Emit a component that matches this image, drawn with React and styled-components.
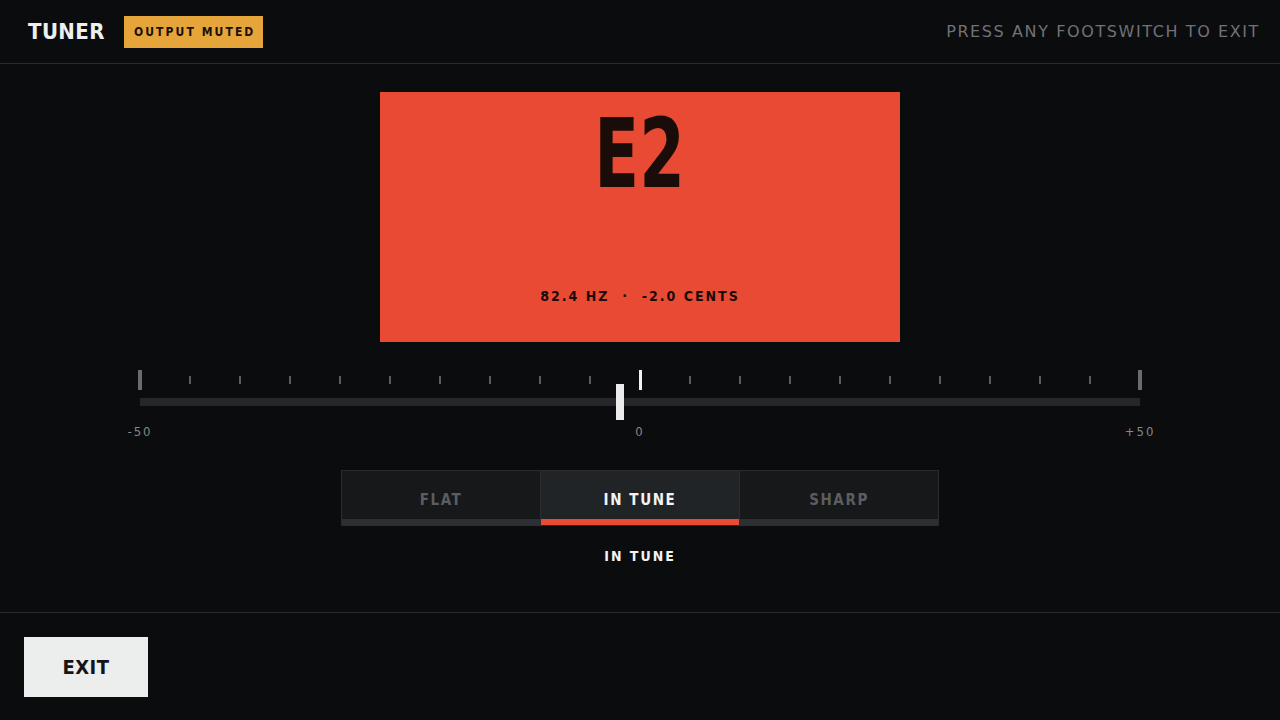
import styled, { createGlobalStyle } from "styled-components";

const GlobalStyle = createGlobalStyle`
  html, body {
    margin: 0;
    padding: 0;
    background: #0b0c0e;
  }
  * { box-sizing: border-box; }
`;

const condensed = `"Liberation Sans Narrow", "DejaVu Sans Condensed", "Liberation Sans", sans-serif`;

const Screen = styled.div`
  width: 1280px;
  height: 720px;
  display: flex;
  flex-direction: column;
  background: #0b0c0e;
  font-family: ${condensed};
  overflow: hidden;
`;

const Header = styled.header`
  height: 64px;
  display: flex;
  align-items: center;
  padding: 0 20px 0 28px;
  border-bottom: 1px solid #2a2b2e;
  flex-shrink: 0;
`;

const Title = styled.div`
  font-size: 22px;
  font-weight: 700;
  color: #eef0f0;
  letter-spacing: 0.4px;
`;

const Badge = styled.div`
  margin-left: 19px;
  height: 32px;
  padding: 0 8px 0 10px;
  display: flex;
  align-items: center;
  background: #e5a53a;
  color: #1b1206;
  font-size: 12px;
  font-weight: 700;
  letter-spacing: 2.1px;
`;

const Hint = styled.div`
  margin-left: auto;
  font-family: "DejaVu Sans", "Liberation Sans", sans-serif;
  font-size: 16px;
  color: #707276;
  letter-spacing: 1.6px;
`;

const Main = styled.main`
  flex: 1;
  display: flex;
  flex-direction: column;
  align-items: center;
  padding-top: 28px;
`;

const NoteBox = styled.div`
  width: 520px;
  height: 250px;
  background: #e84a33;
  display: flex;
  flex-direction: column;
  align-items: center;
  color: #1a0c08;
`;

const Note = styled.div`
  font-size: 96px;
  font-weight: 700;
  line-height: 1;
  margin-top: 14px;
  transform: scaleX(0.76);
`;

const Reading = styled.div`
  margin-top: auto;
  margin-bottom: 38px;
  font-size: 14px;
  font-weight: 700;
  letter-spacing: 2px;
`;

const Scale = styled.div`
  margin-top: 28px;
  width: 1004px;
  position: relative;
`;

const Ticks = styled.div`
  height: 20px;
  display: flex;
  justify-content: space-between;
`;

const TickCell = styled.div`
  width: 4px;
  display: flex;
  justify-content: center;
  align-items: center;
`;

const Tick = styled.div`
  width: ${({ kind }) => (kind === "end" ? 4 : kind === "center" ? 3 : 2)}px;
  height: ${({ kind }) => (kind === "minor" ? 8 : 20)}px;
  background: ${({ kind }) =>
    kind === "center" ? "#f2f2f2" : kind === "end" ? "#6a6c70" : "#5a5c60"};
`;

const Track = styled.div`
  margin: 8px 2px 0;
  height: 8px;
  background: #25272a;
`;

const Needle = styled.div`
  position: absolute;
  top: 14px;
  width: 8px;
  height: 36px;
  margin-left: -4px;
  background: #ececec;
`;

const Labels = styled.div`
  margin: 18px -18px 0;
  display: flex;
  justify-content: space-between;
`;

const Label = styled.div`
  width: 40px;
  text-align: center;
  font-size: 13px;
  color: #85878b;
  letter-spacing: 2px;
`;

const Segments = styled.div`
  margin-top: 31px;
  width: 598px;
  display: flex;
  border: 1px solid #2a2c2f;
`;

const Segment = styled.div`
  flex: 1;
  height: 54px;
  display: flex;
  flex-direction: column;
  background: ${({ active }) => (active ? "#212427" : "#16181a")};
  & + & {
    border-left: 1px solid #2a2c2f;
  }
`;

const SegmentText = styled.div`
  flex: 1;
  display: flex;
  align-items: center;
  justify-content: center;
  padding-top: 9px;
  font-size: 15px;
  font-weight: 700;
  letter-spacing: 1.6px;
  color: ${({ active }) => (active ? "#f2f3f3" : "#5b5d61")};
`;

const SegmentBar = styled.div`
  height: 6px;
  background: ${({ active }) => (active ? "#e84a33" : "#2d2f32")};
`;

const Status = styled.div`
  margin-top: 22px;
  font-size: 14px;
  font-weight: 700;
  color: #f2f3f3;
  letter-spacing: 2px;
`;

const Footer = styled.footer`
  flex-shrink: 0;
  height: 108px;
  border-top: 1px solid #2a2b2e;
  padding: 24px 24px 0;
`;

const ExitButton = styled.button`
  width: 124px;
  height: 60px;
  border: none;
  background: #eceeee;
  color: #141516;
  font-family: ${condensed};
  font-size: 20px;
  font-weight: 700;
  letter-spacing: 0.5px;
  cursor: pointer;
`;

const cents = -2.0;
const modes = ["FLAT", "IN TUNE", "SHARP"];

const App = () => {
  const ticks = Array.from({ length: 21 }, (_, i) =>
    i === 0 || i === 20 ? "end" : i === 10 ? "center" : "minor"
  );
  const needleLeft = 2 + ((cents + 50) / 100) * 1000;

  return (
    <Screen>
      <GlobalStyle />
      <Header>
        <Title>TUNER</Title>
        <Badge>OUTPUT MUTED</Badge>
        <Hint>PRESS ANY FOOTSWITCH TO EXIT</Hint>
      </Header>
      <Main>
        <NoteBox>
          <Note>E2</Note>
          <Reading>82.4 HZ &nbsp;·&nbsp; -2.0 CENTS</Reading>
        </NoteBox>
        <Scale>
          <Ticks>
            {ticks.map((kind, i) => (
              <TickCell key={i}>
                <Tick kind={kind} />
              </TickCell>
            ))}
          </Ticks>
          <Track />
          <Needle style={{ left: needleLeft }} />
          <Labels>
            <Label>-50</Label>
            <Label>0</Label>
            <Label>+50</Label>
          </Labels>
        </Scale>
        <Segments>
          {modes.map((m) => (
            <Segment key={m} active={m === "IN TUNE"}>
              <SegmentText active={m === "IN TUNE"}>{m}</SegmentText>
              <SegmentBar active={m === "IN TUNE"} />
            </Segment>
          ))}
        </Segments>
        <Status>IN TUNE</Status>
      </Main>
      <Footer>
        <ExitButton>EXIT</ExitButton>
      </Footer>
    </Screen>
  );
};

export default App;
